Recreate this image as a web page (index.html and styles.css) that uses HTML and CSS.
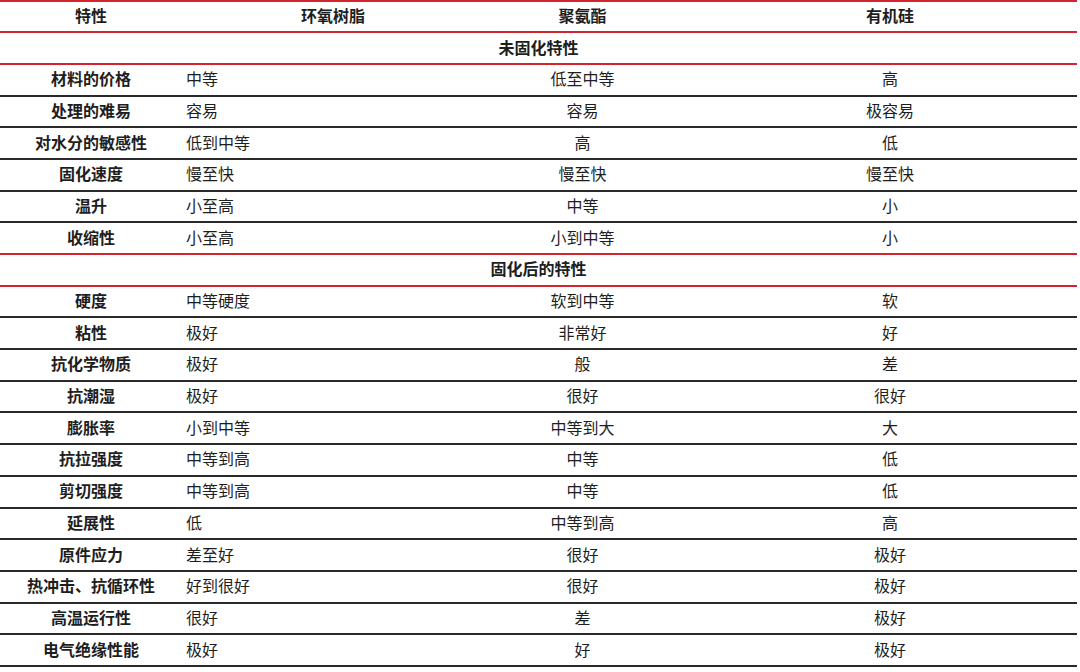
FILE: index.html
```html
<!DOCTYPE html>
<html lang="zh">
<head>
<meta charset="utf-8">
<link rel="stylesheet" href="styles.css">
</head>
<body>
<div class="table">
  <div class="row head red">
    <div class="c0">特性</div><div class="c1 h1">环氧树脂</div><div class="c2">聚氨酯</div><div class="c3">有机硅</div>
  </div>
  <div class="row section red"><div class="span">未固化特性</div></div>
  <div class="row"><div class="c0">材料的价格</div><div class="c1">中等</div><div class="c2">低至中等</div><div class="c3">高</div></div>
  <div class="row"><div class="c0">处理的难易</div><div class="c1">容易</div><div class="c2">容易</div><div class="c3">极容易</div></div>
  <div class="row"><div class="c0">对水分的敏感性</div><div class="c1">低到中等</div><div class="c2">高</div><div class="c3">低</div></div>
  <div class="row"><div class="c0">固化速度</div><div class="c1">慢至快</div><div class="c2">慢至快</div><div class="c3">慢至快</div></div>
  <div class="row"><div class="c0">温升</div><div class="c1">小至高</div><div class="c2">中等</div><div class="c3">小</div></div>
  <div class="row red"><div class="c0">收缩性</div><div class="c1">小至高</div><div class="c2">小到中等</div><div class="c3">小</div></div>
  <div class="row section red"><div class="span">固化后的特性</div></div>
  <div class="row"><div class="c0">硬度</div><div class="c1">中等硬度</div><div class="c2">软到中等</div><div class="c3">软</div></div>
  <div class="row"><div class="c0">粘性</div><div class="c1">极好</div><div class="c2">非常好</div><div class="c3">好</div></div>
  <div class="row"><div class="c0">抗化学物质</div><div class="c1">极好</div><div class="c2">般</div><div class="c3">差</div></div>
  <div class="row"><div class="c0">抗潮湿</div><div class="c1">极好</div><div class="c2">很好</div><div class="c3">很好</div></div>
  <div class="row"><div class="c0">膨胀率</div><div class="c1">小到中等</div><div class="c2">中等到大</div><div class="c3">大</div></div>
  <div class="row"><div class="c0">抗拉强度</div><div class="c1">中等到高</div><div class="c2">中等</div><div class="c3">低</div></div>
  <div class="row"><div class="c0">剪切强度</div><div class="c1">中等到高</div><div class="c2">中等</div><div class="c3">低</div></div>
  <div class="row"><div class="c0">延展性</div><div class="c1">低</div><div class="c2">中等到高</div><div class="c3">高</div></div>
  <div class="row"><div class="c0">原件应力</div><div class="c1">差至好</div><div class="c2">很好</div><div class="c3">极好</div></div>
  <div class="row"><div class="c0">热冲击、抗循环性</div><div class="c1">好到很好</div><div class="c2">很好</div><div class="c3">极好</div></div>
  <div class="row"><div class="c0">高温运行性</div><div class="c1">很好</div><div class="c2">差</div><div class="c3">极好</div></div>
  <div class="row"><div class="c0">电气绝缘性能</div><div class="c1">极好</div><div class="c2">好</div><div class="c3">极好</div></div>
</div>
</body>
</html>
```

FILE: styles.css
```css
html, body {
  margin: 0;
  padding: 0;
  background: #ffffff;
}
body {
  font-family: "Noto Sans CJK SC", "Noto Sans", sans-serif;
  font-size: 16px;
  color: #1e1e1e;
}
.table {
  width: 1077px;
  border-top: 2px solid #d3242d;
}
.row {
  display: grid;
  grid-template-columns: 182px 280px 241px 1fr;
  height: 31.7px;
  box-sizing: border-box;
  border-bottom: 2px solid #2a2a2a;
  align-items: center;
  line-height: 1;
  padding-bottom: 3px;
}
.row.red {
  border-bottom-color: #d3242d;
}
.row.head {
  height: 31.2px;
  font-weight: bold;
}
.row.head .c1 {
  text-align: center;
  padding-left: 22px;
}
.c0 {
  text-align: center;
  font-weight: bold;
}
.c1 {
  text-align: left;
  padding-left: 4px;
}
.c2, .c3 {
  text-align: center;
}
.section {
  grid-template-columns: 1fr;
}
.span {
  text-align: center;
  font-weight: bold;
}
```
